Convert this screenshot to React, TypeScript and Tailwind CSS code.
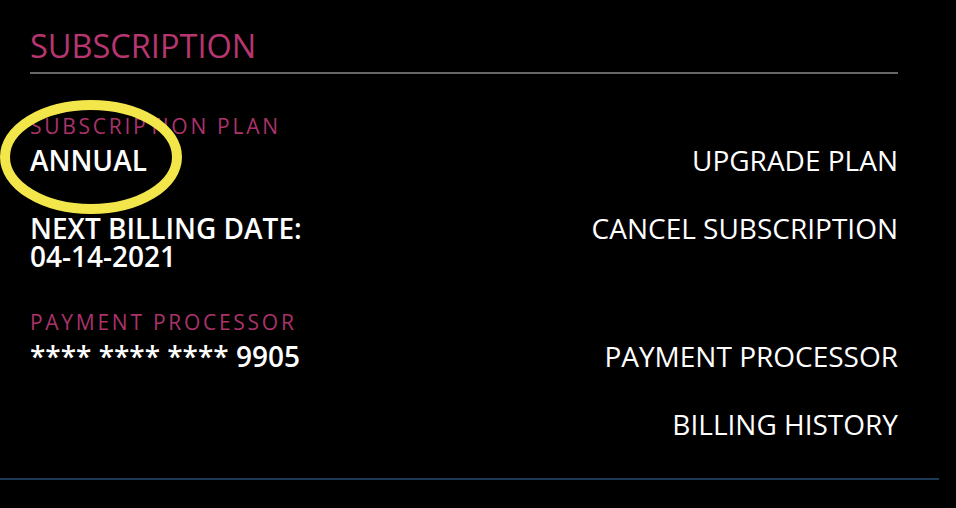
const font = { fontFamily: "'Open Sans', 'Noto Sans', sans-serif" };

export default function App() {
  return (
    <div className="relative min-h-[508px] w-[956px] bg-black text-white" style={font}>
      <div className="w-[939px] border-b-2 border-[#1d3854]">
        <div className="pl-[30px] pr-[41px] pb-[38px]">
          <h1 className="pt-[26px] pb-[6px] text-[32.5px] leading-[40px] text-[#b8366f]">SUBSCRIPTION</h1>
          <div className="h-[2px] bg-[#686868]" />

          <div className="mt-[38px] flex items-end justify-between">
            <div>
              <div className="mb-[4px] text-[21px] leading-[28px] tracking-[0.13em] text-[#a9336a]">SUBSCRIPTION PLAN</div>
              <div className="text-[28px] leading-[32px] font-semibold">ANNUAL</div>
            </div>
            <a className="text-[28px] leading-[32px]">UPGRADE PLAN</a>
          </div>

          <div className="mt-[38px] flex items-start justify-between">
            <div className="text-[28px] leading-[28px] font-semibold">
              <div>NEXT BILLING DATE:</div>
              <div>04-14-2021</div>
            </div>
            <a className="text-[28px] leading-[28px]">CANCEL SUBSCRIPTION</a>
          </div>

          <div className="mt-[38px] flex items-end justify-between">
            <div>
              <div className="mb-[4px] text-[21px] leading-[28px] tracking-[0.13em] text-[#a9336a]">PAYMENT PROCESSOR</div>
              <div className="text-[28px] leading-[32px] font-semibold">**** **** **** 9905</div>
            </div>
            <a className="text-[28px] leading-[32px]">PAYMENT PROCESSOR</a>
          </div>

          <div className="mt-[36px] flex justify-end">
            <a className="text-[28px] leading-[32px]">BILLING HISTORY</a>
          </div>
        </div>
      </div>

      <svg className="pointer-events-none absolute left-0 top-0" width="200" height="230">
        <ellipse cx="91" cy="157" rx="86" ry="52" fill="none" stroke="#f2e64b" strokeWidth="10" />
      </svg>
    </div>
  );
}
